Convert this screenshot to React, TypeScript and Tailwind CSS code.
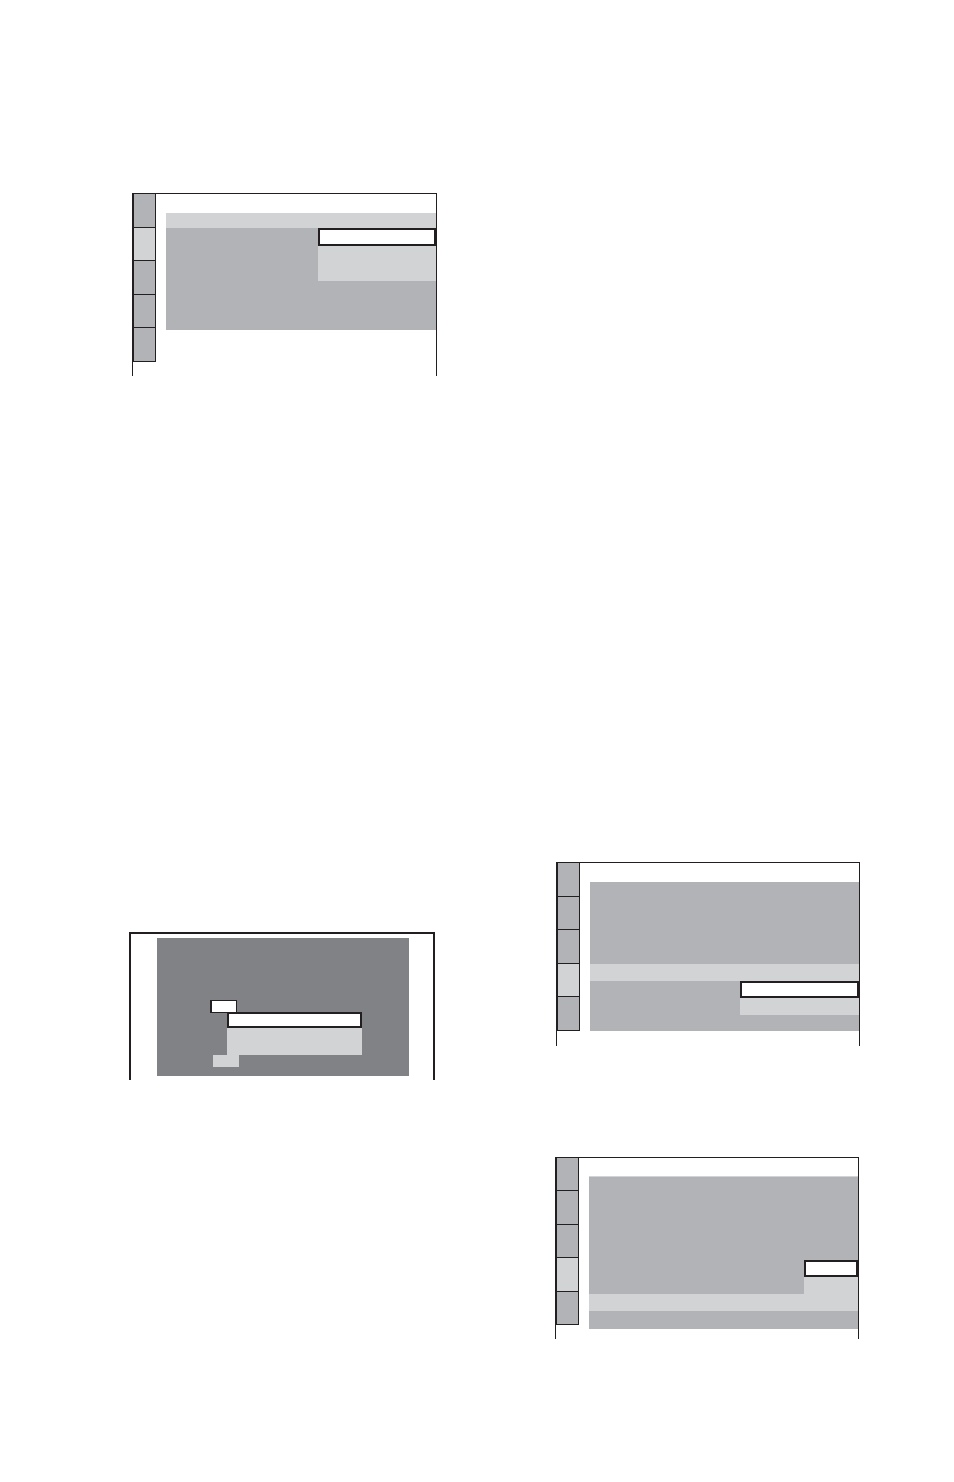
const line = 'border-[#231f20]'

function Sidebar({ active, height }: { active: number; height: number }) {
  return (
    <div
      className={`flex w-[23px] shrink-0 flex-col border-r ${line}`}
      style={{ height }}
    >
      {[0, 1, 2, 3, 4].map((i) => (
        <div
          key={i}
          className={`flex-1 border-b border-l ${line} ${i === active ? 'bg-[#d1d3d4]' : 'bg-[#b1b3b6]'}`}
        />
      ))}
    </div>
  )
}

function FigureLanguage() {
  return (
    <div className={`flex h-[183px] w-[305px] border-x border-t ${line}`}>
      <Sidebar active={1} height={168} />
      <div className="ml-[10px] mt-[19px] flex w-[270px] flex-col self-start">
        <div className="h-[15px] bg-[#d1d3d4]" />
        <div className="flex h-[102px] bg-[#b1b3b6]">
          <div className="flex-1" />
          <div className="flex w-[118px] flex-col">
            <div className={`h-[18px] border-2 bg-white ${line}`} />
            <div className="h-[35px] bg-[#d1d3d4]" />
          </div>
        </div>
      </div>
    </div>
  )
}

function FigureDialog() {
  return (
    <div className={`h-[148px] w-[306px] border-x-2 border-t-2 ${line}`}>
      <div className="ml-[26px] mt-[4px] h-[138px] w-[252px] bg-[#808285] pt-[62px]">
        <div className={`ml-[53px] h-[13px] w-[27px] border border-l-2 bg-white ${line}`} />
        <div className="-mt-px ml-[70px] w-[135px]">
          <div className={`h-[16px] border-2 bg-white ${line}`} />
          <div className="h-[27px] bg-[#d1d3d4]" />
        </div>
        <div className="ml-[56px] h-[12px] w-[26px] bg-[#d1d3d4]" />
      </div>
    </div>
  )
}

function FigureSetup() {
  return (
    <div className={`flex h-[184px] w-[304px] border-x border-t ${line}`}>
      <Sidebar active={3} height={168} />
      <div className="ml-[10px] mt-[19px] flex w-[269px] flex-col self-start bg-[#b1b3b6]">
        <div className="h-[82px]" />
        <div className="h-[17px] bg-[#d1d3d4]" />
        <div className="flex h-[50px]">
          <div className="flex-1" />
          <div className="flex w-[119px] flex-col">
            <div className={`h-[17px] border-2 bg-white ${line}`} />
            <div className="h-[17px] bg-[#d1d3d4]" />
          </div>
        </div>
      </div>
    </div>
  )
}

function FigureAudio() {
  return (
    <div className={`flex h-[182px] w-[304px] border-x border-t ${line}`}>
      <Sidebar active={3} height={167} />
      <div className="ml-[10px] mt-[18px] flex w-[269px] flex-col self-start border-t border-[#d1d3d4] bg-[#b1b3b6]">
        <div className="flex h-[117px]">
          <div className="flex-1" />
          <div className="flex w-[54px] flex-col justify-end">
            <div className={`h-[17px] border-2 bg-white ${line}`} />
            <div className="h-[17px] bg-[#d1d3d4]" />
          </div>
        </div>
        <div className="h-[17px] bg-[#d1d3d4]" />
        <div className="h-[18px]" />
      </div>
    </div>
  )
}

export default function App() {
  return (
    <div className="flex h-[1482px] w-[954px] bg-white pl-[129px]">
      <div className="flex w-[308px] flex-col pt-[193px]">
        <div className="ml-[3px]">
          <FigureLanguage />
        </div>
        <div className="mt-[556px]">
          <FigureDialog />
        </div>
      </div>
      <div className="ml-[118px] flex flex-col pt-[862px]">
        <div className="ml-[1px]">
          <FigureSetup />
        </div>
        <div className="mt-[111px]">
          <FigureAudio />
        </div>
      </div>
    </div>
  )
}
